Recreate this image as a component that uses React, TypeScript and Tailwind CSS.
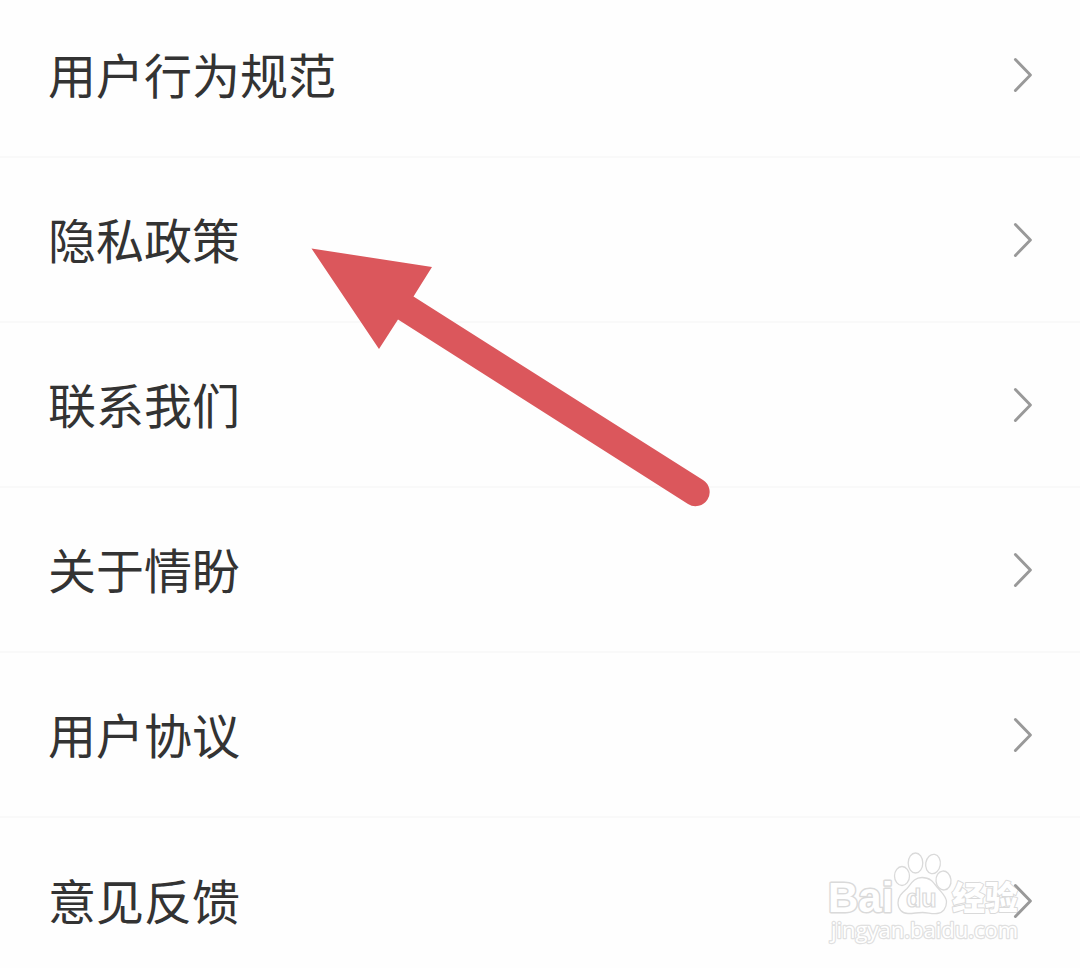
const items = ['用户行为规范', '隐私政策', '联系我们', '关于情盼', '用户协议', '意见反馈'];

function Chevron() {
  return (
    <svg className="relative z-10 h-9 w-5 shrink-0" viewBox="0 0 20 36" fill="none" aria-hidden="true">
      <path d="M2.4 2.6 17.4 18 2.4 33.4" stroke="#999999" strokeWidth="2.9" strokeLinecap="round" strokeLinejoin="round" />
    </svg>
  );
}

function Pointer() {
  return (
    <svg
      className="pointer-events-none absolute left-[311px] top-[248px] h-[260px] w-[400px]"
      viewBox="311 248 400 260"
      aria-hidden="true"
    >
      <path d="M311.5 248.5 432 267 413.5 296.5 703 480A14 14 0 0 1 688 504L398 319.5 379 349Z" fill="#db575c" />
    </svg>
  );
}

function Watermark() {
  return (
    <svg
      className="pointer-events-none absolute right-[55px] top-8 h-[100px] w-[200px]"
      viewBox="825 850 200 100"
      role="img"
      aria-label="Baidu 经验"
      fill="#ffffff"
      stroke="#dadada"
      strokeWidth="1.3"
    >
      <text
        className="font-['Liberation_Sans',sans-serif] font-bold"
        x="828"
        y="912"
        fontSize="42"
        strokeWidth="3"
        strokeLinejoin="round"
        style={{ paintOrder: 'stroke' }}
      >
        Bai
      </text>
      <ellipse cx="902" cy="876" rx="7.5" ry="9.5" />
      <ellipse cx="915.5" cy="863" rx="7.3" ry="10" />
      <ellipse cx="933" cy="864" rx="7.3" ry="9.7" transform="rotate(10 933 864)" />
      <ellipse cx="943.5" cy="880.5" rx="7.5" ry="9.5" transform="rotate(-6 943.5 880.5)" />
      <path d="M922 877.5C914 877.5 911 884 907 888.5 902 893 898 896 898 903 898 909 902 913.5 908 913.5 914 913.5 917 912.5 922.5 912.5 928 912.5 931 914 937 913.5 943 913 946.5 908 946.5 902 946.5 896 941 892 937 887 933 881.5 930 877.5 922 877.5Z" />
      <text
        className="font-['Liberation_Sans',sans-serif] font-bold"
        x="906"
        y="907"
        fontSize="25"
        strokeWidth="1.2"
      >
        du
      </text>
      <text
        className="font-['Noto_Sans_CJK_SC',sans-serif] font-black"
        x="952"
        y="910"
        fontSize="33"
        strokeWidth="2"
        strokeLinejoin="round"
        style={{ paintOrder: 'stroke' }}
      >
        经验
      </text>
      <text
        className="font-['Open_Sans',sans-serif]"
        x="831"
        y="938"
        fontSize="22"
        strokeWidth="2.4"
        strokeLinejoin="round"
        stroke="#e0e0e0"
        style={{ paintOrder: 'stroke' }}
      >
        jingyan.baidu.com
      </text>
    </svg>
  );
}

export default function App() {
  return (
    <main className="relative min-h-screen overflow-hidden bg-[#fefefe] font-['Noto_Sans_CJK_SC',sans-serif] text-[#333333]">
      <ul className="-mt-[7px]">
        {items.map((label, i) => (
          <li key={label} className="relative">
            {i === items.length - 1 && <Watermark />}
            <a
              href="#"
              className={`flex h-[165px] items-center justify-between pl-12 pr-[47px] ${
                i < items.length - 1 ? 'border-b-2 border-[#f9f9f9]' : ''
              }`}
            >
              <span className="pb-1 text-5xl">{label}</span>
              <Chevron />
            </a>
          </li>
        ))}
      </ul>
      <Pointer />
    </main>
  );
}
